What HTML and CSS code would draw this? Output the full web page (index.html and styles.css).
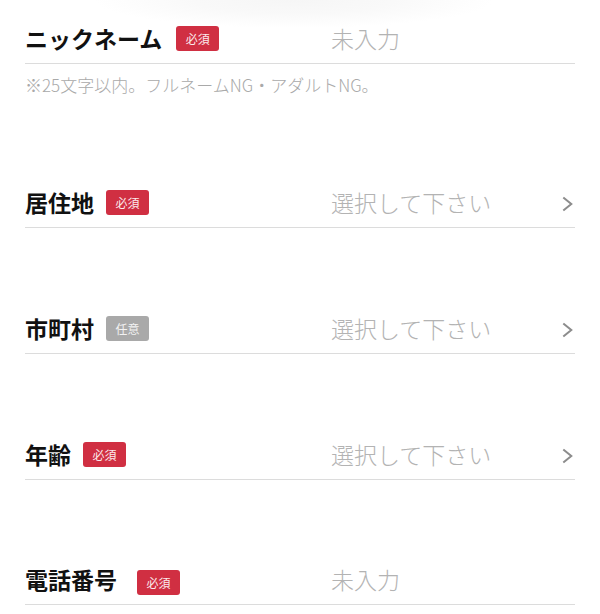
FILE: index.html
```html
<!DOCTYPE html>
<html lang="ja">
<head>
<meta charset="utf-8">
<title>プロフィール入力</title>
<link rel="stylesheet" href="styles.css">
</head>
<body>
<form class="form">
  <div class="field-group">
    <div class="field">
      <div class="label-col"><span class="label">ニックネーム</span><span class="badge required first">必須</span></div>
      <div class="value">未入力</div>
    </div>
    <p class="note">※25文字以内。フルネームNG・アダルトNG。</p>
  </div>

  <div class="field select gap-first">
    <div class="label-col"><span class="label">居住地</span><span class="badge required">必須</span></div>
    <div class="value">選択して下さい</div>
    <svg class="chevron" width="11" height="16" viewBox="0 0 11 16"><polyline points="1.3,1.5 9.3,8 1.3,14.5" fill="none" stroke="#8c8c8c" stroke-width="2"/></svg>
  </div>

  <div class="field select gap">
    <div class="label-col"><span class="label">市町村</span><span class="badge optional">任意</span></div>
    <div class="value">選択して下さい</div>
    <svg class="chevron" width="11" height="16" viewBox="0 0 11 16"><polyline points="1.3,1.5 9.3,8 1.3,14.5" fill="none" stroke="#8c8c8c" stroke-width="2"/></svg>
  </div>

  <div class="field select gap">
    <div class="label-col"><span class="label">年齢</span><span class="badge required">必須</span></div>
    <div class="value">選択して下さい</div>
    <svg class="chevron" width="11" height="16" viewBox="0 0 11 16"><polyline points="1.3,1.5 9.3,8 1.3,14.5" fill="none" stroke="#8c8c8c" stroke-width="2"/></svg>
  </div>

  <div class="field gap-last">
    <div class="label-col"><span class="label">電話番号</span><span class="badge required wide">必須</span></div>
    <div class="value">未入力</div>
  </div>
</form>
</body>
</html>
```

FILE: styles.css
```css
html, body {
  margin: 0;
  padding: 0;
}

body {
  font-family: "Noto Sans CJK JP", "Noto Sans", sans-serif;
  color: #111;
  overflow: hidden;
  background-color: #ffffff;
  background-image: radial-gradient(ellipse 200px 28px at 49% 0, #f6f6f6 0%, #f9f9f9 50%, #ffffff 100%);
  background-repeat: no-repeat;
}

.form {
  margin: 0;
  padding: 19px 25px 0;
}

.field {
  display: flex;
  align-items: center;
  height: 38px;
  padding-bottom: 6px;
  border-bottom: 1px solid #dcdcdc;
}

.label-col {
  width: 306px;
  flex-shrink: 0;
  display: flex;
  align-items: center;
}

.label {
  font-size: 23px;
  font-weight: 700;
  line-height: 32px;
  color: #111;
}

.badge {
  display: inline-block;
  margin-left: 12px;
  width: 43px;
  height: 25px;
  line-height: 25px;
  text-align: center;
  font-size: 12px;
  border-radius: 3px;
  color: #fbeaec;
}

.badge.first {
  margin-left: 14px;
}

.badge.required {
  background: #d02f42;
}

.badge.optional {
  background: #a9a9a9;
  color: #f2f2f2;
}

.badge.wide {
  margin-left: 20px;
  margin-top: 7px;
}

.value {
  flex: 1;
  font-size: 23px;
  font-weight: 300;
  line-height: 32px;
  color: #b3b3b3;
}

.chevron {
  flex-shrink: 0;
  margin-right: 2px;
  margin-top: 4px;
}

.note {
  margin: 9px 0 0;
  font-size: 17px;
  font-weight: 300;
  line-height: 24px;
  color: #a9a9a9;
}

.gap-first {
  margin-top: 86px;
}

.gap {
  margin-top: 81px;
}

.gap-last {
  margin-top: 80px;
}
```
